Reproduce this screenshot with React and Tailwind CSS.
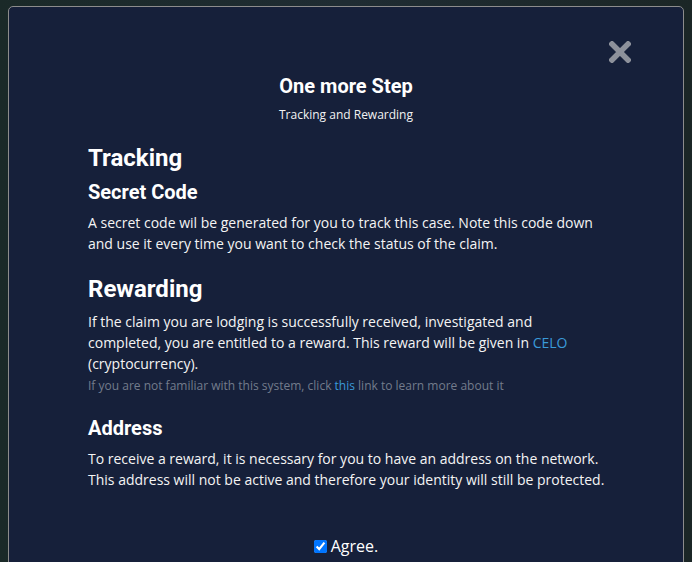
export default function App() {
  return (
    <div className="w-full h-[562px] overflow-hidden bg-gradient-to-r from-[#1a2928] via-[#1f2c33] to-[#1b2626] pt-[6px] px-[8px]">
      <div className="relative h-[600px] rounded-[5px] border border-[#8c8c8c] bg-[#16203a] text-white font-['Open_Sans','Noto_Sans',sans-serif]">
        <button className="absolute left-[599px] top-[33px] w-[24px] h-[24px] flex items-center justify-center">
          <svg width="22" height="22" viewBox="0 0 22 22">
            <path d="M3 3 L19 19 M19 3 L3 19" stroke="#8d919b" strokeWidth="5.5" strokeLinecap="square" />
          </svg>
        </button>
        <div className="flex flex-col items-center pt-[65px]">
          <h2 className="font-['Roboto',sans-serif] text-[20px] leading-[28px] font-bold">One more Step</h2>
          <p className="mt-[7px] text-[12px] leading-[16px] text-[#f2f2f2]">Tracking and Rewarding</p>
        </div>
        <div className="pl-[79px] pr-[60px]">
          <h3 className="font-['Roboto',sans-serif] mt-[19px] text-[24px] leading-[32px] font-bold">Tracking</h3>
          <h4 className="font-['Roboto',sans-serif] mt-[4px] text-[20px] leading-[28px] font-bold">Secret Code</h4>
          <p className="mt-[6px] text-[14px] leading-[21px] text-[#f4f4f4]">
            A secret code wil be generated for you to track this case. Note this code down<br />
            and use it every time you want to check the status of the claim.
          </p>
          <h3 className="font-['Roboto',sans-serif] mt-[19px] text-[24px] leading-[32px] font-bold">Rewarding</h3>
          <p className="mt-[6px] text-[14px] leading-[21px] text-[#f4f4f4]">
            If the claim you are lodging is successfully received, investigated and<br />
            completed, you are entitled to a reward. This reward will be given in <span className="text-[#3a9ad9]">CELO</span><br />
            (cryptocurrency).
          </p>
          <p className="mt-[4px] text-[12px] leading-[16px] text-[#737c8c]">
            If you are not familiar with this system, click <span className="text-[#3a9ad9]">this</span> link to learn more about it
          </p>
          <h4 className="font-['Roboto',sans-serif] mt-[20px] text-[20px] leading-[28px] font-bold">Address</h4>
          <p className="mt-[6px] text-[14px] leading-[21px] text-[#f4f4f4]">
            To receive a reward, it is necessary for you to have an address on the network.<br />
            This address will not be active and therefore your identity will still be protected.
          </p>
        </div>
        <div className="mt-[44px] flex items-center justify-center gap-[4px]">
          <input type="checkbox" checked readOnly className="w-[13px] h-[13px] m-0" />
          <span className="text-[16px] leading-[24px]">Agree.</span>
        </div>
      </div>
    </div>
  );
}
